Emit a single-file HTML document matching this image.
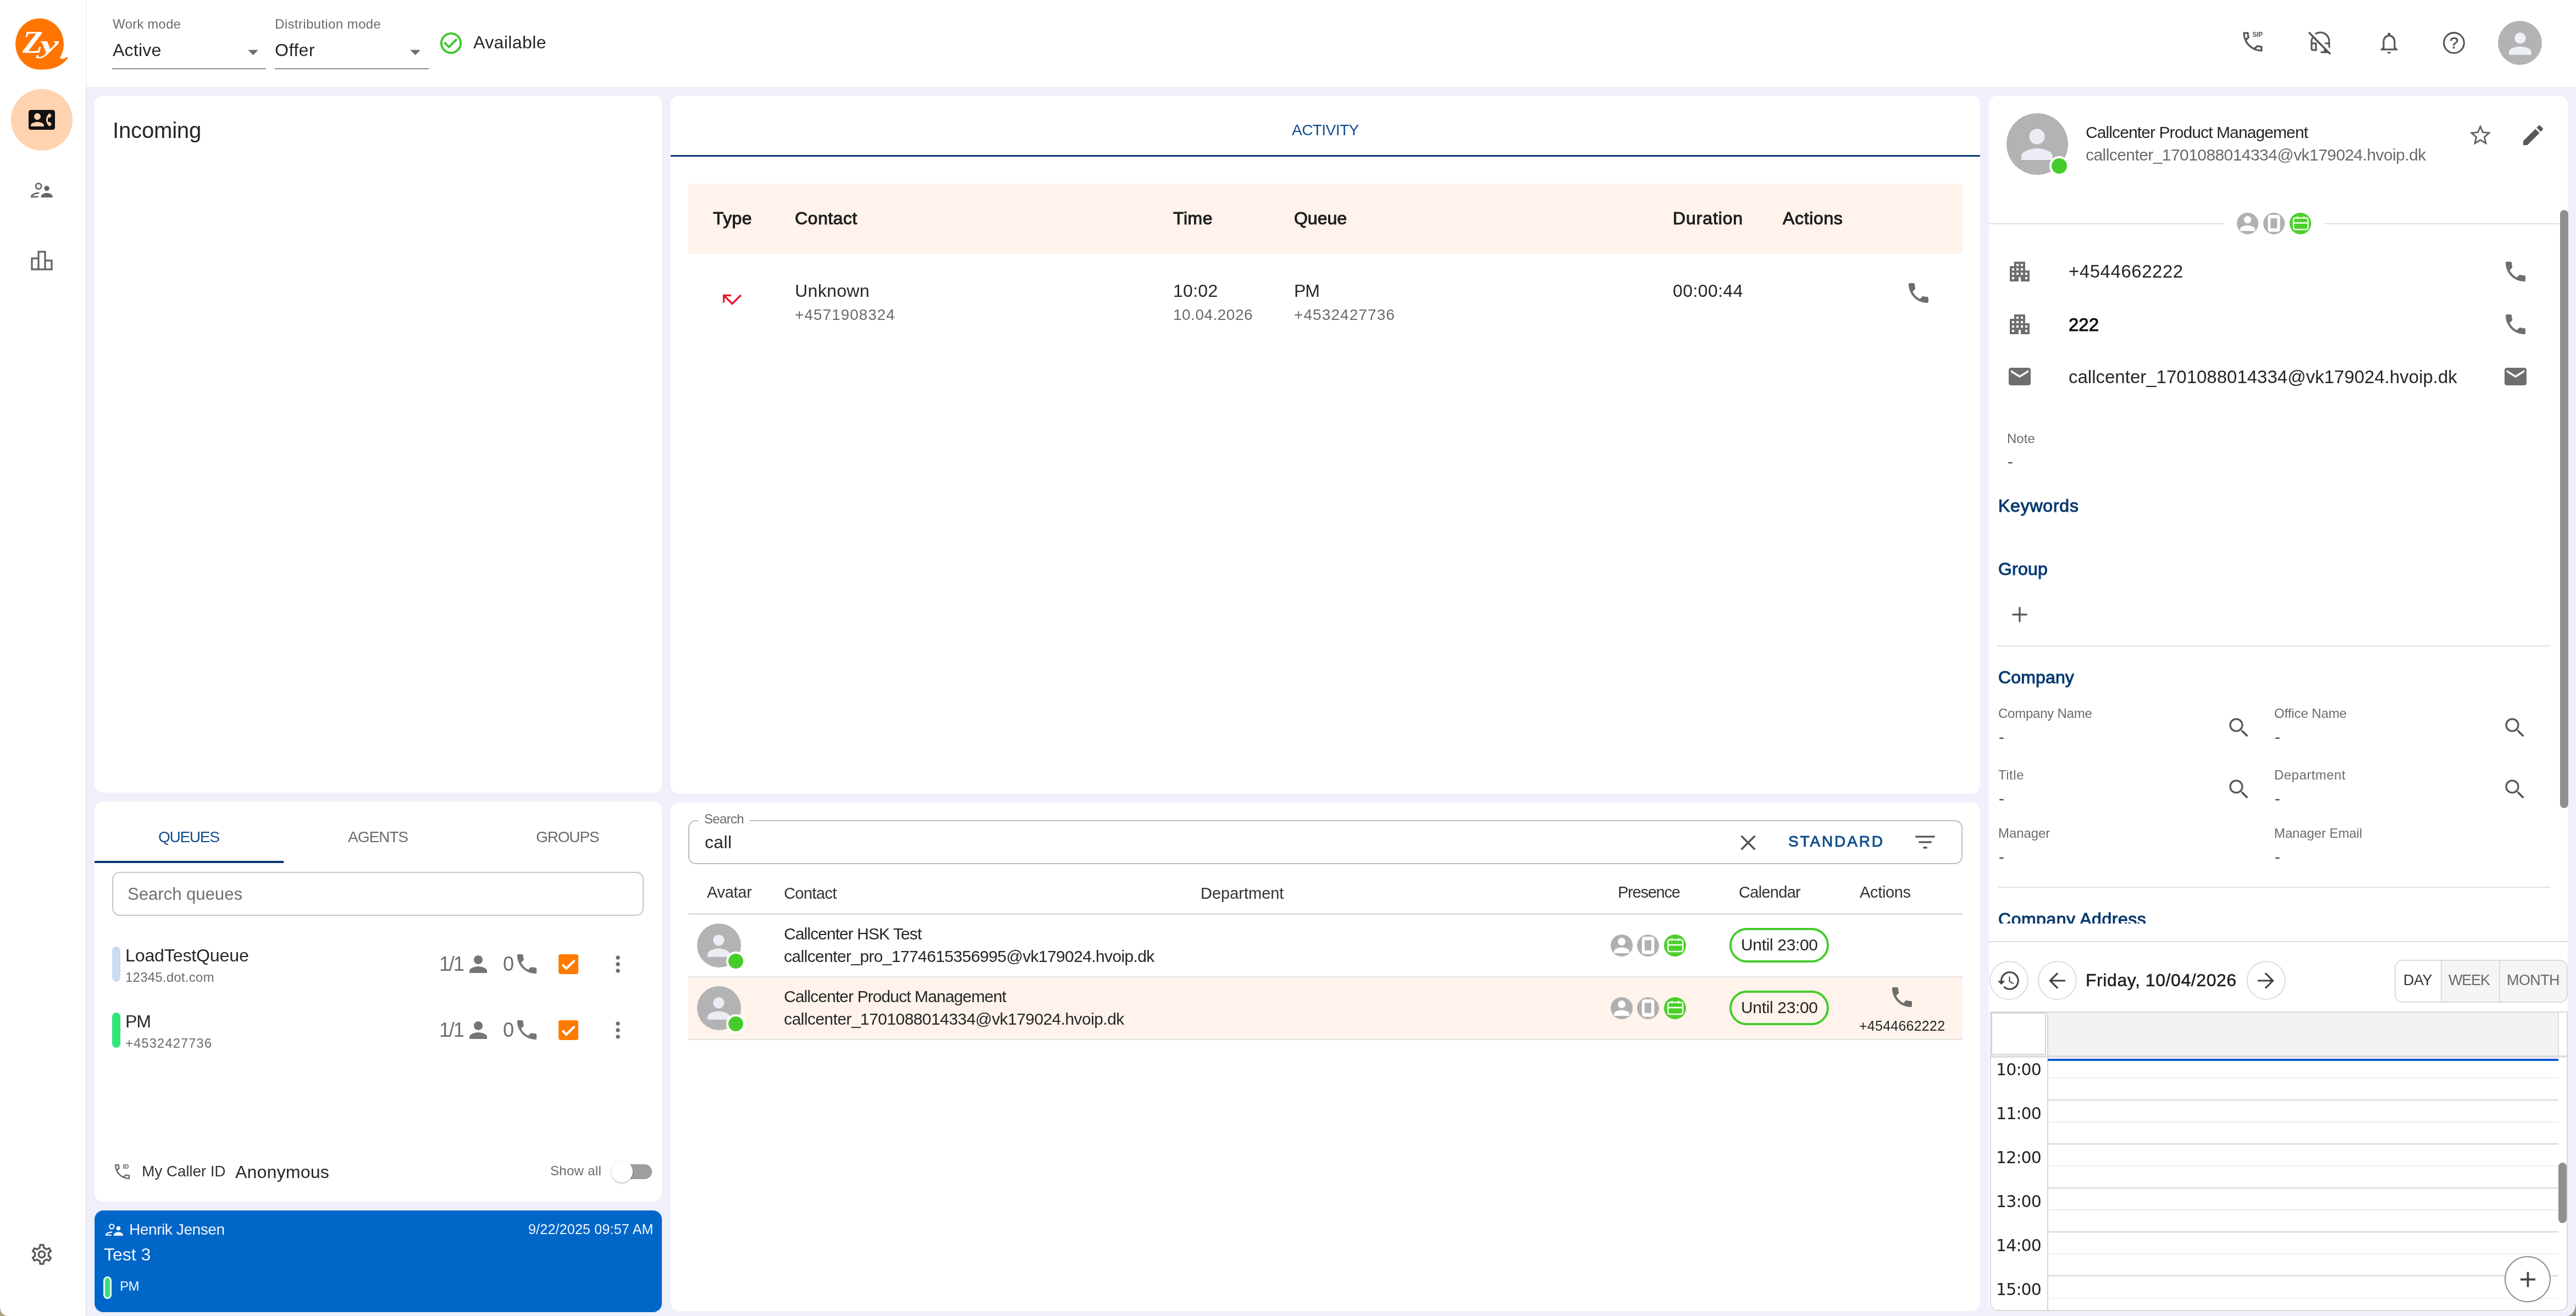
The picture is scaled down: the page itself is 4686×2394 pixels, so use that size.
<!DOCTYPE html>
<html lang="en"><head><meta charset="utf-8"><title>Agent workspace</title>
<style>
html,body{margin:0;padding:0;}
body{width:4686px;height:2394px;position:relative;overflow:hidden;background:#eff0f9;font-family:"Liberation Sans",sans-serif;color:#222;}
.t{position:absolute;white-space:nowrap;line-height:1;will-change:transform;}
svg{display:block;overflow:visible}
</style></head><body>

<div style="position:absolute;left:0px;top:0px;width:4686px;height:158px;background:#fff;border-radius:0px;"></div>
<div style="position:absolute;left:0px;top:0px;width:156px;height:2394px;background:#fff;border-radius:0px;border-right:2px solid #e4e5ee;"></div>
<div style="position:absolute;left:156px;top:0px;width:2px;height:158px;background:#f1f1f3;border-radius:0px;"></div>
<svg style="position:absolute;left:24px;top:30px" width="104" height="100" viewBox="0 0 104 100">
<ellipse cx="48" cy="50" rx="44" ry="46.500" fill="#ff7500"/>
<path fill="#ff7500" d="M48 96.300C66 98 86 93 99 76.500C100.500 74 98.500 73.500 97 74.500C90 78.500 83 78 80 69L60 60Z"/>
<text font-family="'Liberation Serif',serif" font-weight="700" font-style="italic" fill="#fff"><tspan x="17" y="66" font-size="58" textLength="37" lengthAdjust="spacingAndGlyphs">Z</tspan><tspan x="49" y="66" font-size="47" textLength="34" lengthAdjust="spacingAndGlyphs">y</tspan></text></svg>
<div style="position:absolute;left:20px;top:162px;width:112px;height:112px;border-radius:56px;background:#ffd3b0"></div>
<svg style="position:absolute;left:52.0px;top:194.0px;" width="48" height="48" viewBox="0 0 24 24"><path fill="#111" d="M22 3H2C.9 3 0 3.9 0 5v14c0 1.1.9 2 2 2h20c1.1 0 1.99-.9 1.99-2L24 5c0-1.1-.9-2-2-2zM8 6c1.66 0 3 1.34 3 3s-1.34 3-3 3-3-1.34-3-3 1.34-3 3-3zm6 12H2v-1c0-2 4-3.1 6-3.1s6 1.1 6 3.1v1zm3.85-4h1.64L21 16l-1.99 1.99c-1.31-.98-2.28-2.38-2.73-3.99-.18-.64-.28-1.31-.28-2s.1-1.36.28-2c.45-1.62 1.42-3.01 2.73-3.99L21 8l-1.51 2h-1.64c-.22.63-.35 1.3-.35 2s.13 1.37.35 2z"/></svg>
<svg style="position:absolute;left:55px;top:331px" width="42" height="32" viewBox="0 0 42 32">
<circle cx="15.100" cy="7.750" r="5.100" fill="none" stroke="#666" stroke-width="2.800"/>
<path d="M2.600 28.300V26.500C2.600 23 9 20.200 16.300 20.100" fill="none" stroke="#666" stroke-width="2.800"/>
<path d="M1.200 26.900H14.600" fill="none" stroke="#666" stroke-width="2.800"/>
<circle cx="30.100" cy="11.700" r="4.700" fill="#666"/>
<path d="M19.500 28.300v-1.500c0-4.500 6-6.900 10.600-6.900s10.600 2.400 10.600 6.900v1.500z" fill="#666"/></svg>
<svg style="position:absolute;left:52.0px;top:450.2px;" width="48" height="48" viewBox="0 0 24 24"><path fill="#666" stroke="#fff" stroke-width="0.35" d="M16 11V3H8v6H2v12h20V11h-6zm-6-6h4v14h-4V5zm-6 6h4v8H4v-8zm16 8h-4v-6h4v6z"/></svg>
<svg style="position:absolute;left:53.0px;top:2259.0px;" width="46" height="46" viewBox="0 0 24 24"><path fill="#555" stroke="#fff" stroke-width="0.4" d="M19.43 12.98c.04-.32.07-.64.07-.98 0-.34-.03-.66-.07-.98l2.11-1.65c.19-.15.24-.42.12-.64l-2-3.46c-.09-.16-.26-.25-.44-.25-.06 0-.12.01-.17.03l-2.49 1c-.52-.4-1.08-.73-1.69-.98l-.38-2.65C14.46 2.18 14.25 2 14 2h-4c-.25 0-.46.18-.49.42l-.38 2.65c-.61.25-1.17.59-1.69.98l-2.49-1c-.06-.02-.12-.03-.18-.03-.17 0-.34.09-.43.25l-2 3.46c-.13.22-.07.49.12.64l2.11 1.65c-.04.32-.07.65-.07.98 0 .33.03.66.07.98l-2.11 1.65c-.19.15-.24.42-.12.64l2 3.46c.09.16.26.25.44.25.06 0 .12-.01.17-.03l2.49-1c.52.4 1.08.73 1.69.98l.38 2.65c.03.24.24.42.49.42h4c.25 0 .46-.18.49-.42l.38-2.65c.61-.25 1.17-.59 1.69-.98l2.49 1c.06.02.12.03.18.03.17 0 .34-.09.43-.25l2-3.46c.12-.22.07-.49-.12-.64l-2.11-1.65zm-1.98-1.71c.04.31.05.52.05.73 0 .21-.02.43-.05.73l-.14 1.13.89.7 1.08.84-.7 1.21-1.27-.51-1.04-.42-.9.68c-.43.32-.84.56-1.25.73l-1.06.43-.16 1.13-.2 1.35h-1.4l-.19-1.35-.16-1.13-1.06-.43c-.43-.18-.83-.41-1.23-.71l-.91-.7-1.06.43-1.27.51-.7-1.21 1.08-.84.89-.7-.14-1.13c-.03-.31-.05-.54-.05-.74s.02-.43.05-.73l.14-1.13-.89-.7-1.08-.84.7-1.21 1.27.51 1.04.42.9-.68c.43-.32.84-.56 1.25-.73l1.06-.43.16-1.13.2-1.35h1.39l.19 1.35.16 1.13 1.06.43c.43.18.83.41 1.23.71l.91.7 1.06-.43 1.27-.51.7 1.21-1.07.85-.89.7.14 1.13zM12 8c-2.21 0-4 1.79-4 4s1.79 4 4 4 4-1.79 4-4-1.79-4-4-4zm0 6c-1.1 0-2-.9-2-2s.9-2 2-2 2 .9 2 2-.9 2-2 2z"/></svg>
<div style="position:absolute;left:204px;top:123.5px;width:280px;height:2.5px;background:#8c8c8c;border-radius:0px;"></div>
<svg style="position:absolute;left:437.5px;top:71.5px;" width="45" height="45" viewBox="0 0 24 24"><path fill="#6f6f6f" d="M7 10l5 5 5-5z"/></svg>
<div style="position:absolute;left:500px;top:123.5px;width:280px;height:2.5px;background:#8c8c8c;border-radius:0px;"></div>
<svg style="position:absolute;left:733.0px;top:71.5px;" width="45" height="45" viewBox="0 0 24 24"><path fill="#6f6f6f" d="M7 10l5 5 5-5z"/></svg>
<svg style="position:absolute;left:796.5px;top:54.5px;" width="47" height="47" viewBox="0 0 24 24"><path fill="#3fc62c" d="M16.59 7.58L10 14.17l-3.59-3.58L5 12l5 5 8-8zM12 2C6.48 2 2 6.48 2 12s4.48 10 10 10 10-4.48 10-10S17.52 2 12 2zm0 18c-4.42 0-8-3.58-8-8s3.58-8 8-8 8 3.58 8 8-3.58 8-8 8z"/></svg>
<svg style="position:absolute;left:4074px;top:52px" width="48" height="48" viewBox="0 0 24 24"><path fill="#555" stroke="#fff" stroke-width="0.450" d="M20 15.5c-1.25 0-2.45-.2-3.57-.57-.1-.03-.21-.05-.31-.05-.26 0-.51.1-.71.29l-2.2 2.2c-2.83-1.44-5.15-3.75-6.59-6.59l2.2-2.21c.28-.26.36-.65.25-1C8.700 6.450 8.500 5.250 8.500 4c0-.55-.45-1-1-1H4c-.55 0-1 .45-1 1 0 9.390 7.610 17 17 17 .55 0 1-.45 1-1v-3.500c0-.55-.45-1-1-1zM5.030 5h1.500c.07.88.22 1.750.46 2.590L5.790 8.800c-.41-1.210-.67-2.480-.76-3.800zM19 18.970c-1.320-.09-2.600-.35-3.800-.76l1.200-1.200c.85.24 1.720.39 2.600.45v1.510z"/><text x="11.700" y="7.700" font-family="'Liberation Sans',sans-serif" font-weight="700" font-size="6.100" fill="#5a5a5a" textLength="9.300" lengthAdjust="spacingAndGlyphs">SIP</text></svg>
<svg style="position:absolute;left:4197.0px;top:53.0px;" width="48" height="48" viewBox="0 0 24 24"><path fill="#555" stroke="#fff" stroke-width="0.45" d="M12 4c3.87 0 7 3.13 7 7v1h-4v.17L16.83 14H19v2.17l2 2V11c0-4.97-4.03-9-9-9-2.02 0-3.88.67-5.38 1.8l1.43 1.43C9.17 4.46 10.53 4 12 4zM2.1 2.1L.69 3.51l3.64 3.64C3.49 8.32 3 9.63 3 11v7c0 1.1.9 2 2 2h4v-8H5v-1c0-.86.16-1.68.44-2.45L15 18.12V20h-3v2h6c.28 0 .55-.06.79-.16l1.69 1.69 1.41-1.41L2.1 2.1zM7 14v4H5v-4h2z"/></svg>
<svg style="position:absolute;left:4322.0px;top:54.0px;" width="48" height="48" viewBox="0 0 24 24"><path fill="#555" stroke="#fff" stroke-width="0.45" d="M12 22c1.1 0 2-.9 2-2h-4c0 1.1.9 2 2 2zm6-6v-5c0-3.07-1.63-5.64-4.5-6.32V4c0-.83-.67-1.5-1.5-1.5s-1.5.67-1.5 1.5v.68C7.64 5.36 6 7.92 6 11v5l-2 2v1h16v-1l-2-2zm-2 1H8v-6c0-2.48 1.51-4.5 4-4.5s4 2.02 4 4.5v6z"/></svg>
<svg style="position:absolute;left:4440px;top:54px" width="48" height="48" viewBox="0 0 24 24"><circle cx="12" cy="12" r="9.200" fill="none" stroke="#555" stroke-width="1.550"/><text x="12" y="17.200" text-anchor="middle" font-family="'Liberation Sans',sans-serif" font-size="14.500" fill="#555" stroke="#555" stroke-width="0.350">?</text></svg>
<div style="position:absolute;left:4544px;top:38px;width:80px;height:80px;border-radius:40px;background:#b3b3b3;overflow:hidden"><svg style="position:absolute;left:9.500px;top:11px" width="61" height="61" viewBox="0 0 24 24"><path fill="#eef0f8" d="M12 12c2.21 0 4-1.79 4-4s-1.79-4-4-4-4 1.79-4 4 1.79 4 4 4zm0 2c-2.67 0-8 1.34-8 4v2h16v-2c0-2.66-5.33-4-8-4z"/></svg></div>
<div style="position:absolute;left:172px;top:174px;width:1032px;height:1268px;background:#fff;border-radius:15px;"></div>
<div style="position:absolute;left:1220px;top:174px;width:2382px;height:1270px;background:#fff;border-radius:15px;"></div>
<div style="position:absolute;left:1220px;top:281.5px;width:2382px;height:3.5px;background:#0b3a78;border-radius:0px;"></div>
<div style="position:absolute;left:1252px;top:334px;width:2318px;height:128px;background:#fff3eb;border-radius:0px;"></div>
<svg style="position:absolute;left:1309.0px;top:521.5px;" width="46" height="46" viewBox="0 0 24 24"><path fill="#e8102a" stroke="#fff" stroke-width="0.3" d="M19.59 7L12 14.59 6.41 9H11V7H3v8h2v-4.59l7 7 9-9z"/></svg>
<svg style="position:absolute;left:3466.0px;top:509.0px;" width="48" height="48" viewBox="0 0 24 24"><path fill="#6e6e6e" d="M6.62 10.79c1.44 2.83 3.76 5.14 6.59 6.59l2.2-2.2c.27-.27.67-.36 1.02-.24 1.12.37 2.33.57 3.57.57.55 0 1 .45 1 1V20c0 .55-.45 1-1 1-9.39 0-17-7.61-17-17 0-.55.45-1 1-1h3.5c.55 0 1 .45 1 1 0 1.25.2 2.45.57 3.57.11.35.03.74-.25 1.02l-2.2 2.2z"/></svg>
<div style="position:absolute;left:172px;top:1457.5px;width:1032px;height:728.5px;background:#fff;border-radius:15px;"></div>
<div style="position:absolute;left:172px;top:1566px;width:344px;height:3.5px;background:#0b3a78;border-radius:0px;"></div>
<div style="position:absolute;left:204px;top:1586px;width:963px;height:76px;border:2px solid #c6c6c6;border-radius:14px"></div>
<div style="position:absolute;left:204px;top:1721.5px;width:15px;height:64px;background:#c9dcf3;border-radius:7.5px;"></div>
<svg style="position:absolute;left:846.0px;top:1729.5px;" width="48" height="48" viewBox="0 0 24 24"><path fill="#757575" d="M12 12c2.21 0 4-1.79 4-4s-1.79-4-4-4-4 1.79-4 4 1.79 4 4 4zm0 2c-2.67 0-8 1.34-8 4v2h16v-2c0-2.66-5.33-4-8-4z"/></svg>
<svg style="position:absolute;left:934.5px;top:1730.0px;" width="47" height="47" viewBox="0 0 24 24"><path fill="#757575" d="M6.62 10.79c1.44 2.83 3.76 5.14 6.59 6.59l2.2-2.2c.27-.27.67-.36 1.02-.24 1.12.37 2.33.57 3.57.57.55 0 1 .45 1 1V20c0 .55-.45 1-1 1-9.39 0-17-7.61-17-17 0-.55.45-1 1-1h3.5c.55 0 1 .45 1 1 0 1.25.2 2.45.57 3.57.11.35.03.74-.25 1.02l-2.2 2.2z"/></svg>
<div style="position:absolute;left:1016px;top:1735.5px;width:36px;height:36px;border-radius:4px;background:#ff7a00"><svg width="36" height="36" viewBox="0 0 24 24"><path d="M4.800 12.600l4.700 4.700 10-10" fill="none" stroke="#fff" stroke-width="2.900"/></svg></div>
<svg style="position:absolute;left:1100.0px;top:1729.5px;" width="48" height="48" viewBox="0 0 24 24"><path fill="#6e6e6e" stroke="#fff" stroke-width="0.3" d="M12 8c1.1 0 2-.9 2-2s-.9-2-2-2-2 .9-2 2 .9 2 2 2zm0 2c-1.1 0-2 .9-2 2s.9 2 2 2 2-.9 2-2-.9-2-2-2zm0 6c-1.1 0-2 .9-2 2s.9 2 2 2 2-.9 2-2-.9-2-2-2z"/></svg>
<div style="position:absolute;left:204px;top:1841.5px;width:15px;height:64px;background:#2fe67b;border-radius:7.5px;"></div>
<svg style="position:absolute;left:846.0px;top:1849.5px;" width="48" height="48" viewBox="0 0 24 24"><path fill="#757575" d="M12 12c2.21 0 4-1.79 4-4s-1.79-4-4-4-4 1.79-4 4 1.79 4 4 4zm0 2c-2.67 0-8 1.34-8 4v2h16v-2c0-2.66-5.33-4-8-4z"/></svg>
<svg style="position:absolute;left:934.5px;top:1850.0px;" width="47" height="47" viewBox="0 0 24 24"><path fill="#757575" d="M6.62 10.79c1.44 2.83 3.76 5.14 6.59 6.59l2.2-2.2c.27-.27.67-.36 1.02-.24 1.12.37 2.33.57 3.57.57.55 0 1 .45 1 1V20c0 .55-.45 1-1 1-9.39 0-17-7.61-17-17 0-.55.45-1 1-1h3.5c.55 0 1 .45 1 1 0 1.25.2 2.45.57 3.57.11.35.03.74-.25 1.02l-2.2 2.2z"/></svg>
<div style="position:absolute;left:1016px;top:1855.5px;width:36px;height:36px;border-radius:4px;background:#ff7a00"><svg width="36" height="36" viewBox="0 0 24 24"><path d="M4.800 12.600l4.700 4.700 10-10" fill="none" stroke="#fff" stroke-width="2.900"/></svg></div>
<svg style="position:absolute;left:1100.0px;top:1849.5px;" width="48" height="48" viewBox="0 0 24 24"><path fill="#6e6e6e" stroke="#fff" stroke-width="0.3" d="M12 8c1.1 0 2-.9 2-2s-.9-2-2-2-2 .9-2 2 .9 2 2 2zm0 2c-1.1 0-2 .9-2 2s.9 2 2 2 2-.9 2-2-.9-2-2-2zm0 6c-1.1 0-2 .9-2 2s.9 2 2 2 2-.9 2-2-.9-2-2-2z"/></svg>
<svg style="position:absolute;left:203.500px;top:2113.200px" width="37" height="37" viewBox="0 0 24 24"><path fill="#666" stroke="#fff" stroke-width="0.500" d="M6.54 5c.06.89.21 1.76.45 2.59l-1.2 1.2c-.41-1.2-.67-2.47-.76-3.79h1.51m9.86 12.02c.85.24 1.72.39 2.6.45v1.49c-1.32-.09-2.59-.35-3.8-.75l1.2-1.19M7.5 3H4c-.55 0-1 .45-1 1 0 9.39 7.61 17 17 17 .55 0 1-.45 1-1v-3.49c0-.55-.45-1-1-1-1.24 0-2.45-.2-3.57-.57-.1-.04-.21-.05-.31-.05-.26 0-.51.1-.71.29l-2.2 2.2c-2.83-1.45-5.15-3.76-6.59-6.59l2.2-2.2c.28-.28.36-.67.25-1.02C8.7 6.45 8.5 5.25 8.5 4c0-.55-.45-1-1-1z"/><text x="12.600" y="8.500" font-family="'Liberation Sans',sans-serif" font-weight="700" font-size="7" fill="#666">ID</text></svg>
<div style="position:absolute;left:1131px;top:2117.5px;width:55px;height:27px;background:#9e9e9e;border-radius:13.5px;"></div>
<div style="position:absolute;left:1112px;top:2111.500px;width:39px;height:39px;border-radius:50%;background:#fff;box-shadow:0 2px 3px rgba(0,0,0,.2),0 0 2px rgba(0,0,0,.16)"></div>
<div style="position:absolute;left:172px;top:2202px;width:1032px;height:184.5px;background:#0066c8;border-radius:16px;"></div>
<svg style="position:absolute;left:191px;top:2225px" width="34" height="26" viewBox="0 0 42 32">
<circle cx="15.100" cy="7.750" r="5.100" fill="none" stroke="#f1f5fb" stroke-width="2.800"/>
<path d="M2.600 28.300V26.500C2.600 23 9 20.200 16.300 20.100" fill="none" stroke="#f1f5fb" stroke-width="2.800"/>
<path d="M1.200 26.900H14.600" fill="none" stroke="#f1f5fb" stroke-width="2.800"/>
<circle cx="30.100" cy="11.700" r="4.700" fill="#f1f5fb"/>
<path d="M19.500 28.300v-1.500c0-4.500 6-6.900 10.600-6.900s10.600 2.400 10.600 6.900v1.500z" fill="#f1f5fb"/></svg>
<div style="position:absolute;left:188px;top:2322px;width:9px;height:35px;border-radius:8px;background:#2fe67b;border:3px solid #eafff2"></div>
<div style="position:absolute;left:1220px;top:1459.5px;width:2382px;height:925.5px;background:#fff;border-radius:15px;"></div>
<div style="position:absolute;left:1252px;top:1492px;width:2314px;height:76px;border:2px solid #bdbdbd;border-radius:14px"></div>
<div style="position:absolute;left:1270px;top:1488px;width:94px;height:10px;background:#fff;border-radius:0px;"></div>
<svg style="position:absolute;left:3156.0px;top:1508.6px;" width="48" height="48" viewBox="0 0 24 24"><path fill="#555" stroke="#fff" stroke-width="0.35" d="M19 6.41L17.59 5 12 10.59 6.41 5 5 6.41 10.59 12 5 17.59 6.41 19 12 13.41 17.59 19 19 17.59 13.41 12z"/></svg>
<svg style="position:absolute;left:3477.5px;top:1508.0px;" width="48" height="48" viewBox="0 0 24 24"><path fill="#555" stroke="#fff" stroke-width="0.35" d="M10 18h4v-2h-4v2zM3 6v2h18V6H3zm3 7h12v-2H6v2z"/></svg>
<div style="position:absolute;left:1252px;top:1661px;width:2318px;height:2.5px;background:#dedede;border-radius:0px;"></div>
<div style="position:absolute;left:1252px;top:1777px;width:2318px;height:114px;background:#fff3eb;border-radius:0px;"></div>
<div style="position:absolute;left:1252px;top:1775.5px;width:2318px;height:2.5px;background:#e2e2e2;border-radius:0px;"></div>
<div style="position:absolute;left:1252px;top:1889.5px;width:2318px;height:2.5px;background:#e2e2e2;border-radius:0px;"></div>
<div style="position:absolute;left:1267.7px;top:1679.5px;width:80px;height:80px;border-radius:50%;background:#b3b3b3"><svg style="position:absolute;left:9.6px;top:10.0px" width="60.8" height="60.8" viewBox="0 0 24 24"><path fill="#ececf4" d="M12 12c2.21 0 4-1.79 4-4s-1.79-4-4-4-4 1.79-4 4 1.79 4 4 4zm0 2c-2.67 0-8 1.34-8 4v2h16v-2c0-2.66-5.33-4-8-4z"/></svg></div>
<div style="position:absolute;left:1320.7px;top:1730.5px;width:27.0px;height:27.0px;border-radius:50%;background:#44cc2c;border:4px solid #fff"></div>
<svg style="position:absolute;left:2929.8px;top:1699.5px" width="40" height="40" viewBox="0 0 40 40"><circle cx="20" cy="20" r="20" fill="#b0b0b0"/><circle cx="20" cy="13" r="6.900" fill="#fff"/><path d="M6 34v-3.500c0-4.700 9.300-7 14-7s14 2.300 14 7V34z" fill="#fff"/></svg>
<svg style="position:absolute;left:2978.3px;top:1699.5px" width="40" height="40" viewBox="0 0 40 40"><circle cx="20" cy="20" r="20" fill="#b0b0b0"/><rect x="8.700" y="4" width="22.600" height="31.500" rx="4.500" fill="#fff"/><rect x="13.800" y="10.300" width="12" height="18.500" fill="#b0b0b0"/></svg>
<svg style="position:absolute;left:3026.8px;top:1699.5px" width="40" height="40" viewBox="0 0 40 40"><circle cx="20" cy="20" r="20" fill="#4ccf2b"/><rect x="7.200" y="9.600" width="27" height="21.500" rx="3.500" fill="none" stroke="#f4fff0" stroke-width="2.500"/><rect x="7.200" y="17.600" width="27" height="2.700" fill="#f4fff0"/><rect x="13.400" y="6.800" width="2.600" height="4.500" fill="#f4fff0"/><rect x="25.400" y="6.800" width="2.600" height="4.500" fill="#f4fff0"/></svg>
<div style="position:absolute;left:3146px;top:1688.0px;width:173px;height:55px;border:4px solid #44cc2c;border-radius:32px"></div>
<div style="position:absolute;left:1267.7px;top:1793.5px;width:80px;height:80px;border-radius:50%;background:#b3b3b3"><svg style="position:absolute;left:9.6px;top:10.0px" width="60.8" height="60.8" viewBox="0 0 24 24"><path fill="#ececf4" d="M12 12c2.21 0 4-1.79 4-4s-1.79-4-4-4-4 1.79-4 4 1.79 4 4 4zm0 2c-2.67 0-8 1.34-8 4v2h16v-2c0-2.66-5.33-4-8-4z"/></svg></div>
<div style="position:absolute;left:1320.7px;top:1844.5px;width:27.0px;height:27.0px;border-radius:50%;background:#44cc2c;border:4px solid #fff"></div>
<svg style="position:absolute;left:2929.8px;top:1813.5px" width="40" height="40" viewBox="0 0 40 40"><circle cx="20" cy="20" r="20" fill="#b0b0b0"/><circle cx="20" cy="13" r="6.900" fill="#fff"/><path d="M6 34v-3.500c0-4.700 9.300-7 14-7s14 2.300 14 7V34z" fill="#fff"/></svg>
<svg style="position:absolute;left:2978.3px;top:1813.5px" width="40" height="40" viewBox="0 0 40 40"><circle cx="20" cy="20" r="20" fill="#b0b0b0"/><rect x="8.700" y="4" width="22.600" height="31.500" rx="4.500" fill="#fff"/><rect x="13.800" y="10.300" width="12" height="18.500" fill="#b0b0b0"/></svg>
<svg style="position:absolute;left:3026.8px;top:1813.5px" width="40" height="40" viewBox="0 0 40 40"><circle cx="20" cy="20" r="20" fill="#4ccf2b"/><rect x="7.200" y="9.600" width="27" height="21.500" rx="3.500" fill="none" stroke="#f4fff0" stroke-width="2.500"/><rect x="7.200" y="17.600" width="27" height="2.700" fill="#f4fff0"/><rect x="13.400" y="6.800" width="2.600" height="4.500" fill="#f4fff0"/><rect x="25.400" y="6.800" width="2.600" height="4.500" fill="#f4fff0"/></svg>
<div style="position:absolute;left:3146px;top:1802.0px;width:173px;height:55px;border:4px solid #44cc2c;border-radius:32px"></div>
<svg style="position:absolute;left:3435.8px;top:1790.0px;" width="48" height="48" viewBox="0 0 24 24"><path fill="#6e6e6e" d="M6.62 10.79c1.44 2.83 3.76 5.14 6.59 6.59l2.2-2.2c.27-.27.67-.36 1.02-.24 1.12.37 2.33.57 3.57.57.55 0 1 .45 1 1V20c0 .55-.45 1-1 1-9.39 0-17-7.61-17-17 0-.55.45-1 1-1h3.5c.55 0 1 .45 1 1 0 1.25.2 2.45.57 3.57.11.35.03.74-.25 1.02l-2.2 2.2z"/></svg>
<div style="position:absolute;left:3618px;top:174px;width:1053px;height:2211px;background:#fff;border-radius:16px;"></div>
<div style="position:absolute;left:3650px;top:206px;width:112px;height:112px;border-radius:50%;background:#b3b3b3"><svg style="position:absolute;left:13.4px;top:14.0px" width="85.1" height="85.1" viewBox="0 0 24 24"><path fill="#ececf4" d="M12 12c2.21 0 4-1.79 4-4s-1.79-4-4-4-4 1.79-4 4 1.79 4 4 4zm0 2c-2.67 0-8 1.34-8 4v2h16v-2c0-2.66-5.33-4-8-4z"/></svg></div>
<div style="position:absolute;left:3728px;top:284px;width:28px;height:28px;border-radius:50%;background:#44cc2c;border:4px solid #fff"></div>
<svg style="position:absolute;left:4488.0px;top:221.5px;" width="48" height="48" viewBox="0 0 24 24"><path fill="#5a5a5a" stroke="#fff" stroke-width="0.3" d="M22 9.24l-7.19-.62L12 2 9.19 8.63 2 9.24l5.46 4.73L5.82 21 12 17.27 18.18 21l-1.63-7.03L22 9.24zM12 15.4l-3.76 2.27 1-4.28-3.32-2.88 4.38-.38L12 6.1l1.71 4.04 4.38.38-3.32 2.88 1 4.28L12 15.4z"/></svg>
<svg style="position:absolute;left:4584.0px;top:221.5px;" width="48" height="48" viewBox="0 0 24 24"><path fill="#5a5a5a" d="M3 17.25V21h3.75L17.81 9.94l-3.75-3.75L3 17.25zM20.71 7.04c.39-.39.39-1.02 0-1.41l-2.34-2.34c-.39-.39-1.02-.39-1.41 0l-1.83 1.83 3.75 3.75 1.83-1.83z"/></svg>
<div style="position:absolute;left:3618px;top:406px;width:428px;height:2px;background:#e0e0e0;border-radius:0px;"></div>
<div style="position:absolute;left:4229px;top:406px;width:427px;height:2px;background:#e0e0e0;border-radius:0px;"></div>
<svg style="position:absolute;left:4068.7px;top:387.2px" width="39.2" height="39.2" viewBox="0 0 40 40"><circle cx="20" cy="20" r="20" fill="#b0b0b0"/><circle cx="20" cy="13" r="6.900" fill="#fff"/><path d="M6 34v-3.500c0-4.700 9.300-7 14-7s14 2.300 14 7V34z" fill="#fff"/></svg>
<svg style="position:absolute;left:4116.8px;top:387.2px" width="39.2" height="39.2" viewBox="0 0 40 40"><circle cx="20" cy="20" r="20" fill="#b0b0b0"/><rect x="8.700" y="4" width="22.600" height="31.500" rx="4.500" fill="#fff"/><rect x="13.800" y="10.300" width="12" height="18.500" fill="#b0b0b0"/></svg>
<svg style="position:absolute;left:4164.9px;top:387.2px" width="39.2" height="39.2" viewBox="0 0 40 40"><circle cx="20" cy="20" r="20" fill="#4ccf2b"/><rect x="7.200" y="9.600" width="27" height="21.500" rx="3.500" fill="none" stroke="#f4fff0" stroke-width="2.500"/><rect x="7.200" y="17.600" width="27" height="2.700" fill="#f4fff0"/><rect x="13.400" y="6.800" width="2.600" height="4.500" fill="#f4fff0"/><rect x="25.400" y="6.800" width="2.600" height="4.500" fill="#f4fff0"/></svg>
<div style="position:absolute;left:4657px;top:382px;width:15px;height:1088px;background:#8f8f8f;border-radius:8px;"></div>
<svg style="position:absolute;left:3650.0px;top:470.0px;" width="48" height="48" viewBox="0 0 24 24"><path fill="#6e6e6e" d="M17 11V3H7v4H3v14h8v-4h2v4h8V11h-4zM7 19H5v-2h2v2zm0-4H5v-2h2v2zm0-4H5V9h2v2zm4 4H9v-2h2v2zm0-4H9V9h2v2zm0-4H9V5h2v2zm4 8h-2v-2h2v2zm0-4h-2V9h2v2zm0-4h-2V5h2v2zm4 12h-2v-2h2v2zm0-4h-2v-2h2v2z"/></svg>
<svg style="position:absolute;left:4552.0px;top:470.0px;" width="48" height="48" viewBox="0 0 24 24"><path fill="#6e6e6e" d="M6.62 10.79c1.44 2.83 3.76 5.14 6.59 6.59l2.2-2.2c.27-.27.67-.36 1.02-.24 1.12.37 2.33.57 3.57.57.55 0 1 .45 1 1V20c0 .55-.45 1-1 1-9.39 0-17-7.61-17-17 0-.55.45-1 1-1h3.5c.55 0 1 .45 1 1 0 1.25.2 2.45.57 3.57.11.35.03.74-.25 1.02l-2.2 2.2z"/></svg>
<svg style="position:absolute;left:3650.0px;top:565.7px;" width="48" height="48" viewBox="0 0 24 24"><path fill="#6e6e6e" d="M17 11V3H7v4H3v14h8v-4h2v4h8V11h-4zM7 19H5v-2h2v2zm0-4H5v-2h2v2zm0-4H5V9h2v2zm4 4H9v-2h2v2zm0-4H9V9h2v2zm0-4H9V5h2v2zm4 8h-2v-2h2v2zm0-4h-2V9h2v2zm0-4h-2V5h2v2zm4 12h-2v-2h2v2zm0-4h-2v-2h2v2z"/></svg>
<svg style="position:absolute;left:4552.0px;top:565.7px;" width="48" height="48" viewBox="0 0 24 24"><path fill="#6e6e6e" d="M6.62 10.79c1.44 2.83 3.76 5.14 6.59 6.59l2.2-2.2c.27-.27.67-.36 1.02-.24 1.12.37 2.33.57 3.57.57.55 0 1 .45 1 1V20c0 .55-.45 1-1 1-9.39 0-17-7.61-17-17 0-.55.45-1 1-1h3.5c.55 0 1 .45 1 1 0 1.25.2 2.45.57 3.57.11.35.03.74-.25 1.02l-2.2 2.2z"/></svg>
<svg style="position:absolute;left:3650.0px;top:661.0px;" width="48" height="48" viewBox="0 0 24 24"><path fill="#6e6e6e" d="M20 4H4c-1.1 0-1.99.9-1.99 2L2 18c0 1.1.9 2 2 2h16c1.1 0 2-.9 2-2V6c0-1.1-.9-2-2-2zm0 4l-8 5-8-5V6l8 5 8-5v2z"/></svg>
<svg style="position:absolute;left:4552.0px;top:661.0px;" width="48" height="48" viewBox="0 0 24 24"><path fill="#6e6e6e" d="M20 4H4c-1.1 0-1.99.9-1.99 2L2 18c0 1.1.9 2 2 2h16c1.1 0 2-.9 2-2V6c0-1.1-.9-2-2-2zm0 4l-8 5-8-5V6l8 5 8-5v2z"/></svg>
<svg style="position:absolute;left:3650.0px;top:1094.0px;" width="48" height="48" viewBox="0 0 24 24"><path fill="#555" stroke="#fff" stroke-width="0.4" d="M19 13h-6v6h-2v-6H5v-2h6V5h2v6h6v2z"/></svg>
<div style="position:absolute;left:3634px;top:1174px;width:1006px;height:2px;background:#e0e0e0;border-radius:0px;"></div>
<svg style="position:absolute;left:4048.6px;top:1299.5px;" width="48" height="48" viewBox="0 0 24 24"><path fill="#555" stroke="#fff" stroke-width="0.4" d="M15.5 14h-.79l-.28-.27C15.41 12.59 16 11.11 16 9.5 16 5.91 13.09 3 9.5 3S3 5.91 3 9.5 5.91 16 9.5 16c1.61 0 3.09-.59 4.23-1.57l.27.28v.79l5 4.99L20.49 19l-4.99-5zm-6 0C7.01 14 5 11.99 5 9.5S7.01 5 9.5 5 14 7.01 14 9.5 11.99 14 9.5 14z"/></svg>
<svg style="position:absolute;left:4551.0px;top:1299.5px;" width="48" height="48" viewBox="0 0 24 24"><path fill="#555" stroke="#fff" stroke-width="0.4" d="M15.5 14h-.79l-.28-.27C15.41 12.59 16 11.11 16 9.5 16 5.91 13.09 3 9.5 3S3 5.91 3 9.5 5.91 16 9.5 16c1.61 0 3.09-.59 4.23-1.57l.27.28v.79l5 4.99L20.49 19l-4.99-5zm-6 0C7.01 14 5 11.99 5 9.5S7.01 5 9.5 5 14 7.01 14 9.5 11.99 14 9.5 14z"/></svg>
<svg style="position:absolute;left:4048.6px;top:1411.5px;" width="48" height="48" viewBox="0 0 24 24"><path fill="#555" stroke="#fff" stroke-width="0.4" d="M15.5 14h-.79l-.28-.27C15.41 12.59 16 11.11 16 9.5 16 5.91 13.09 3 9.5 3S3 5.91 3 9.5 5.91 16 9.5 16c1.61 0 3.09-.59 4.23-1.57l.27.28v.79l5 4.99L20.49 19l-4.99-5zm-6 0C7.01 14 5 11.99 5 9.5S7.01 5 9.5 5 14 7.01 14 9.5 11.99 14 9.5 14z"/></svg>
<svg style="position:absolute;left:4551.0px;top:1411.5px;" width="48" height="48" viewBox="0 0 24 24"><path fill="#555" stroke="#fff" stroke-width="0.4" d="M15.5 14h-.79l-.28-.27C15.41 12.59 16 11.11 16 9.5 16 5.91 13.09 3 9.5 3S3 5.91 3 9.5 5.91 16 9.5 16c1.61 0 3.09-.59 4.23-1.57l.27.28v.79l5 4.99L20.49 19l-4.99-5zm-6 0C7.01 14 5 11.99 5 9.5S7.01 5 9.5 5 14 7.01 14 9.5 11.99 14 9.5 14z"/></svg>
<div style="position:absolute;left:3634px;top:1613px;width:1006px;height:2px;background:#e0e0e0;border-radius:0px;"></div>
<div style="position:absolute;left:3630px;top:1640px;width:600px;height:40px;overflow:hidden"><div class="t" style="left:4.600px;top:16px;font-size:32px;-webkit-text-stroke:1.020px #06396f;color:#06396f;letter-spacing:0.520px">Company Address</div></div>
<div style="position:absolute;left:3618px;top:1711.5px;width:1053px;height:2px;background:#dcdcdc;border-radius:0px;"></div>
<div style="position:absolute;left:3618.9px;top:1748.0px;width:67px;height:67px;border-radius:50%;border:2px solid #dcdcdc;background:#fff"></div>
<svg style="position:absolute;left:3631.4px;top:1760.5px;" width="46" height="46" viewBox="0 0 24 24"><path fill="#444" stroke="#fff" stroke-width="0.4" d="M13 3c-4.97 0-9 4.03-9 9H1l3.89 3.89.07.14L9 12H6c0-3.87 3.13-7 7-7s7 3.13 7 7-3.13 7-7 7c-1.93 0-3.68-.79-4.94-2.06l-1.42 1.42C8.27 19.99 10.51 21 13 21c4.97 0 9-4.03 9-9s-4.03-9-9-9zm-1 5v5l4.28 2.54.72-1.21-3.5-2.08V8H12z"/></svg>
<div style="position:absolute;left:3706.5px;top:1748.0px;width:67px;height:67px;border-radius:50%;border:2px solid #dcdcdc;background:#fff"></div>
<svg style="position:absolute;left:3719.0px;top:1760.5px;" width="46" height="46" viewBox="0 0 24 24"><path fill="#444" stroke="#fff" stroke-width="0.4" d="M20 11H7.83l5.59-5.59L12 4l-8 8 8 8 1.41-1.41L7.83 13H20v-2z"/></svg>
<div style="position:absolute;left:4086.5px;top:1748.0px;width:67px;height:67px;border-radius:50%;border:2px solid #dcdcdc;background:#fff"></div>
<svg style="position:absolute;left:4099.0px;top:1760.5px;" width="46" height="46" viewBox="0 0 24 24"><path fill="#444" stroke="#fff" stroke-width="0.4" d="M12 4l-1.41 1.41L16.17 11H4v2h12.17l-5.58 5.59L12 20l8-8z"/></svg>
<div style="position:absolute;left:4356px;top:1746px;width:311px;height:74px;border:2px solid #dcdcdc;border-radius:14px;background:#f5f5f5;overflow:hidden"><div style="position:absolute;left:0;top:0;width:82px;height:74px;background:#fff;border-right:2px solid #dcdcdc"></div><div style="position:absolute;left:188px;top:0;width:2px;height:74px;background:#dcdcdc"></div></div>
<div style="position:absolute;left:3620px;top:1840px;width:1051px;height:545px;background:#fff;border-radius:0px;border:2px solid #d9d9d9;box-sizing:border-box;border-radius:0 0 15px 15px"></div>
<div style="position:absolute;left:3725px;top:1842px;width:929px;height:78px;background:#f2f2f2;border-radius:0px;"></div>
<div style="position:absolute;left:3622px;top:1919.5px;width:1047px;height:4px;background:#dedede;border-radius:0px;"></div>
<div style="position:absolute;left:3622px;top:1842px;width:100px;height:77px;background:#fff;border-radius:0px;border:2px solid #d4d4d4;box-sizing:border-box"></div>
<div style="position:absolute;left:3723.5px;top:1842px;width:2px;height:541px;background:#d6d6d6;border-radius:0px;"></div>
<div style="position:absolute;left:4653px;top:1842px;width:2px;height:80px;background:#dcdcdc;border-radius:0px;"></div>
<div style="position:absolute;left:3725px;top:1925.5px;width:929px;height:4.5px;background:#0a57d6;border-radius:0px;"></div>
<div style="position:absolute;left:3725px;top:1960.0px;width:929px;height:1.5px;background:#ededed;border-radius:0px;"></div>
<div style="position:absolute;left:3725px;top:1999.6px;width:929px;height:2px;background:#d4d4d4;border-radius:0px;"></div>
<div style="position:absolute;left:3725px;top:2040.1px;width:929px;height:1.5px;background:#ededed;border-radius:0px;"></div>
<div style="position:absolute;left:3725px;top:2079.7px;width:929px;height:2px;background:#d4d4d4;border-radius:0px;"></div>
<div style="position:absolute;left:3725px;top:2120.2px;width:929px;height:1.5px;background:#ededed;border-radius:0px;"></div>
<div style="position:absolute;left:3725px;top:2159.8px;width:929px;height:2px;background:#d4d4d4;border-radius:0px;"></div>
<div style="position:absolute;left:3725px;top:2200.3px;width:929px;height:1.5px;background:#ededed;border-radius:0px;"></div>
<div style="position:absolute;left:3725px;top:2239.9px;width:929px;height:2px;background:#d4d4d4;border-radius:0px;"></div>
<div style="position:absolute;left:3725px;top:2280.4px;width:929px;height:1.5px;background:#ededed;border-radius:0px;"></div>
<div style="position:absolute;left:3725px;top:2320.0px;width:929px;height:2px;background:#d4d4d4;border-radius:0px;"></div>
<div style="position:absolute;left:3725px;top:2360.5px;width:929px;height:1.5px;background:#ededed;border-radius:0px;"></div>
<div style="position:absolute;left:4654px;top:2115px;width:15px;height:110px;background:#8f8f8f;border-radius:8px;"></div>
<div style="position:absolute;left:4556px;top:2285px;width:80px;height:80px;border-radius:50%;border:2px solid #8a8a8a;background:#fff"></div>
<svg style="position:absolute;left:4574.5px;top:2304.3px;" width="47" height="47" viewBox="0 0 24 24"><path fill="#444" stroke="#fff" stroke-width="0.12" d="M19 13h-6v6h-2v-6H5v-2h6V5h2v6h6v2z"/></svg>
<div style="position:absolute;left:0;top:2379px;width:13px;height:15px;background:radial-gradient(ellipse 13px 15px at 100% 0,rgba(170,162,115,0) 94%,#aaa273 100%)"></div>
<div style="position:absolute;left:4671px;top:2371px;width:15px;height:23px;background:radial-gradient(ellipse 15px 23px at 0 0,rgba(150,150,127,0) 94%,#96967f 100%)"></div>
<div class="t" style="top:32.4px;font-size:24px;color:#6b6b6b;letter-spacing:0.19px;left:205.0px;">Work mode</div>
<div class="t" style="top:74.9px;font-size:32px;color:#262626;letter-spacing:0.23px;left:205.0px;">Active</div>
<div class="t" style="top:32.4px;font-size:24px;color:#6b6b6b;letter-spacing:0.37px;left:500.0px;">Distribution mode</div>
<div class="t" style="top:74.9px;font-size:32px;color:#262626;letter-spacing:0.49px;left:500.0px;">Offer</div>
<div class="t" style="top:60.9px;font-size:32px;color:#262626;letter-spacing:0.41px;left:861.0px;">Available</div>
<div class="t" style="top:217.0px;font-size:40px;color:#262626;letter-spacing:-0.16px;left:205.0px;">Incoming</div>
<div class="t" style="top:222.5px;font-size:28px;color:#0f4d8c;letter-spacing:-0.55px;left:2349.9px;">ACTIVITY</div>
<div class="t" style="top:381.1px;font-size:32px;color:#1d1d1d;-webkit-text-stroke:1.02px #1d1d1d;letter-spacing:0.36px;left:1297.0px;">Type</div>
<div class="t" style="top:381.1px;font-size:32px;color:#1d1d1d;-webkit-text-stroke:1.02px #1d1d1d;letter-spacing:0.49px;left:1446.0px;">Contact</div>
<div class="t" style="top:381.1px;font-size:32px;color:#1d1d1d;-webkit-text-stroke:1.02px #1d1d1d;letter-spacing:0.52px;left:2134.0px;">Time</div>
<div class="t" style="top:381.1px;font-size:32px;color:#1d1d1d;-webkit-text-stroke:1.02px #1d1d1d;letter-spacing:-0.02px;left:2354.0px;">Queue</div>
<div class="t" style="top:381.1px;font-size:32px;color:#1d1d1d;-webkit-text-stroke:1.02px #1d1d1d;letter-spacing:0.88px;left:3043.0px;">Duration</div>
<div class="t" style="top:381.1px;font-size:32px;color:#1d1d1d;-webkit-text-stroke:1.02px #1d1d1d;letter-spacing:0.65px;left:3243.0px;">Actions</div>
<div class="t" style="top:513.1px;font-size:32px;color:#262626;letter-spacing:0.37px;left:1446.0px;">Unknown</div>
<div class="t" style="top:558.5px;font-size:28px;color:#6b6b6b;letter-spacing:0.96px;left:1446.0px;">+4571908324</div>
<div class="t" style="top:513.1px;font-size:32px;color:#262626;letter-spacing:0.28px;left:2134.0px;">10:02</div>
<div class="t" style="top:558.5px;font-size:28px;color:#6b6b6b;letter-spacing:0.49px;left:2134.0px;">10.04.2026</div>
<div class="t" style="top:513.1px;font-size:32px;color:#262626;letter-spacing:-1.00px;left:2354.0px;">PM</div>
<div class="t" style="top:558.5px;font-size:28px;color:#6b6b6b;letter-spacing:1.08px;left:2354.0px;">+4532427736</div>
<div class="t" style="top:513.1px;font-size:32px;color:#262626;letter-spacing:0.43px;left:3043.0px;">00:00:44</div>
<div class="t" style="top:1508.5px;font-size:28px;color:#0f4d8c;letter-spacing:-1.28px;left:287.7px;">QUEUES</div>
<div class="t" style="top:1508.5px;font-size:28px;color:#6b6b6b;letter-spacing:-1.02px;left:633.0px;">AGENTS</div>
<div class="t" style="top:1508.5px;font-size:28px;color:#6b6b6b;letter-spacing:-1.14px;left:974.8px;">GROUPS</div>
<div class="t" style="top:1611.1px;font-size:31px;color:#707070;letter-spacing:0.03px;left:232.4px;">Search queues</div>
<div class="t" style="top:1722.1px;font-size:32px;color:#262626;letter-spacing:-0.10px;left:228.0px;">LoadTestQueue</div>
<div class="t" style="top:1766.4px;font-size:24px;color:#6b6b6b;letter-spacing:0.22px;left:228.0px;">12345.dot.com</div>
<div class="t" style="top:1735.6px;font-size:36px;color:#6e6e6e;letter-spacing:-2.18px;left:798.5px;">1/1</div>
<div class="t" style="top:1735.6px;font-size:36px;color:#6e6e6e;letter-spacing:-0.53px;left:915.0px;">0</div>
<div class="t" style="top:1842.1px;font-size:32px;color:#262626;letter-spacing:-1.00px;left:228.0px;">PM</div>
<div class="t" style="top:1886.4px;font-size:24px;color:#6b6b6b;letter-spacing:0.95px;left:228.0px;">+4532427736</div>
<div class="t" style="top:1855.6px;font-size:36px;color:#6e6e6e;letter-spacing:-2.18px;left:798.5px;">1/1</div>
<div class="t" style="top:1855.6px;font-size:36px;color:#6e6e6e;letter-spacing:-0.53px;left:915.0px;">0</div>
<div class="t" style="top:2116.5px;font-size:28px;color:#333;letter-spacing:-0.13px;left:257.6px;">My Caller ID</div>
<div class="t" style="top:2115.6px;font-size:32px;color:#262626;letter-spacing:0.22px;left:428.0px;">Anonymous</div>
<div class="t" style="top:2118.4px;font-size:24px;color:#6b6b6b;letter-spacing:0.29px;left:1000.6px;">Show all</div>
<div class="t" style="top:2222.5px;font-size:28px;color:#f1f5fb;letter-spacing:-0.41px;left:235.0px;">Henrik Jensen</div>
<div class="t" style="top:2223.9px;font-size:25px;color:#f1f5fb;letter-spacing:0.21px;left:961.0px;">9/22/2025 09:57 AM</div>
<div class="t" style="top:2265.6px;font-size:32px;color:#f1f5fb;left:189.0px;">Test 3</div>
<div class="t" style="top:2328.4px;font-size:24px;color:#f1f5fb;letter-spacing:-0.50px;left:218.0px;">PM</div>
<div class="t" style="top:1478.4px;font-size:24px;color:#6b6b6b;letter-spacing:-0.67px;left:1280.5px;">Search</div>
<div class="t" style="top:1515.6px;font-size:32px;color:#262626;letter-spacing:0.37px;left:1281.5px;">call</div>
<div class="t" style="top:1517.1px;font-size:28px;color:#0f4d8c;-webkit-text-stroke:0.90px #0f4d8c;letter-spacing:2.88px;left:3253.0px;">STANDARD</div>
<div class="t" style="top:1609.0px;font-size:29px;color:#333;letter-spacing:-0.30px;left:1286.0px;">Avatar</div>
<div class="t" style="top:1611.0px;font-size:29px;color:#333;letter-spacing:-0.62px;left:1425.6px;">Contact</div>
<div class="t" style="top:1611.0px;font-size:29px;color:#333;letter-spacing:-0.01px;left:2184.0px;">Department</div>
<div class="t" style="top:1609.0px;font-size:29px;color:#333;letter-spacing:-1.24px;left:2942.5px;">Presence</div>
<div class="t" style="top:1609.0px;font-size:29px;color:#333;letter-spacing:-0.71px;left:3162.8px;">Calendar</div>
<div class="t" style="top:1609.0px;font-size:29px;color:#333;letter-spacing:-0.34px;left:3382.6px;">Actions</div>
<div class="t" style="top:1683.5px;font-size:30px;color:#262626;letter-spacing:-0.94px;left:1425.6px;">Callcenter HSK Test</div>
<div class="t" style="top:1724.5px;font-size:30px;color:#262626;letter-spacing:-0.63px;left:1425.6px;">callcenter_pro_1774615356995@vk179024.hvoip.dk</div>
<div class="t" style="top:1704.0px;font-size:30px;color:#262626;letter-spacing:-0.34px;left:3166.7px;">Until 23:00</div>
<div class="t" style="top:1797.5px;font-size:30px;color:#262626;letter-spacing:-0.91px;left:1425.6px;">Callcenter Product Management</div>
<div class="t" style="top:1838.5px;font-size:30px;color:#262626;letter-spacing:-0.57px;left:1425.6px;">callcenter_1701088014334@vk179024.hvoip.dk</div>
<div class="t" style="top:1818.0px;font-size:30px;color:#262626;letter-spacing:-0.34px;left:3166.7px;">Until 23:00</div>
<div class="t" style="top:1854.4px;font-size:25px;color:#262626;letter-spacing:0.24px;left:3381.7px;">+4544662222</div>
<div class="t" style="top:225.5px;font-size:30px;color:#262626;letter-spacing:-0.90px;left:3794.0px;">Callcenter Product Management</div>
<div class="t" style="top:266.5px;font-size:30px;color:#6b6b6b;letter-spacing:-0.57px;left:3794.0px;">callcenter_1701088014334@vk179024.hvoip.dk</div>
<div class="t" style="top:477.1px;font-size:33px;color:#262626;letter-spacing:0.54px;left:3763.0px;">+4544662222</div>
<div class="t" style="top:573.6px;font-size:33px;color:#111;-webkit-text-stroke:1.06px #111;letter-spacing:-0.02px;left:3763.0px;">222</div>
<div class="t" style="top:669.1px;font-size:33px;color:#262626;left:3763.0px;">callcenter_1701088014334@vk179024.hvoip.dk</div>
<div class="t" style="top:786.4px;font-size:24px;color:#6b6b6b;letter-spacing:0.02px;left:3650.5px;">Note</div>
<div class="t" style="top:824.5px;font-size:30px;color:#444;left:3652.0px;">-</div>
<div class="t" style="top:903.6px;font-size:32px;color:#06396f;-webkit-text-stroke:1.02px #06396f;letter-spacing:0.77px;left:3634.6px;">Keywords</div>
<div class="t" style="top:1018.6px;font-size:32px;color:#06396f;-webkit-text-stroke:1.02px #06396f;letter-spacing:0.21px;left:3634.6px;">Group</div>
<div class="t" style="top:1215.6px;font-size:32px;color:#06396f;-webkit-text-stroke:1.02px #06396f;letter-spacing:0.15px;left:3634.6px;">Company</div>
<div class="t" style="top:1286.4px;font-size:24px;color:#6b6b6b;letter-spacing:-0.24px;left:3634.6px;">Company Name</div>
<div class="t" style="top:1325.5px;font-size:30px;color:#444;left:3635.6px;">-</div>
<div class="t" style="top:1286.4px;font-size:24px;color:#6b6b6b;letter-spacing:-0.10px;left:4137.0px;">Office Name</div>
<div class="t" style="top:1325.5px;font-size:30px;color:#444;left:4138.0px;">-</div>
<div class="t" style="top:1398.4px;font-size:24px;color:#6b6b6b;letter-spacing:0.51px;left:3634.6px;">Title</div>
<div class="t" style="top:1437.5px;font-size:30px;color:#444;left:3635.6px;">-</div>
<div class="t" style="top:1398.4px;font-size:24px;color:#6b6b6b;letter-spacing:0.46px;left:4137.0px;">Department</div>
<div class="t" style="top:1437.5px;font-size:30px;color:#444;left:4138.0px;">-</div>
<div class="t" style="top:1504.4px;font-size:24px;color:#6b6b6b;letter-spacing:-0.10px;left:3634.6px;">Manager</div>
<div class="t" style="top:1543.5px;font-size:30px;color:#444;left:3635.6px;">-</div>
<div class="t" style="top:1504.4px;font-size:24px;color:#6b6b6b;letter-spacing:-0.11px;left:4137.0px;">Manager Email</div>
<div class="t" style="top:1543.5px;font-size:30px;color:#444;left:4138.0px;">-</div>
<div class="t" style="top:1767.1px;font-size:32px;color:#1d1d1d;letter-spacing:0.57px;left:3794.4px;-webkit-text-stroke:0.500px #1d1d1d;">Friday, 10/04/2026</div>
<div class="t" style="top:1770.0px;font-size:27px;color:#333;letter-spacing:-0.51px;left:4371.7px;">DAY</div>
<div class="t" style="top:1770.0px;font-size:27px;color:#6a6a6a;letter-spacing:-1.13px;left:4453.9px;">WEEK</div>
<div class="t" style="top:1770.0px;font-size:27px;color:#6a6a6a;letter-spacing:-0.60px;left:4559.7px;">MONTH</div>
<div class="t" style="top:1930.9px;font-size:30px;color:#222;font-family:'DejaVu Sans',sans-serif;letter-spacing:-0.89px;left:3630.5px;">10:00</div>
<div class="t" style="top:2011.0px;font-size:30px;color:#222;font-family:'DejaVu Sans',sans-serif;letter-spacing:-0.89px;left:3630.5px;">11:00</div>
<div class="t" style="top:2091.1px;font-size:30px;color:#222;font-family:'DejaVu Sans',sans-serif;letter-spacing:-0.89px;left:3630.5px;">12:00</div>
<div class="t" style="top:2171.2px;font-size:30px;color:#222;font-family:'DejaVu Sans',sans-serif;letter-spacing:-0.89px;left:3630.5px;">13:00</div>
<div class="t" style="top:2251.3px;font-size:30px;color:#222;font-family:'DejaVu Sans',sans-serif;letter-spacing:-0.89px;left:3630.5px;">14:00</div>
<div class="t" style="top:2331.4px;font-size:30px;color:#222;font-family:'DejaVu Sans',sans-serif;letter-spacing:-0.89px;left:3630.5px;">15:00</div>
</body></html>
